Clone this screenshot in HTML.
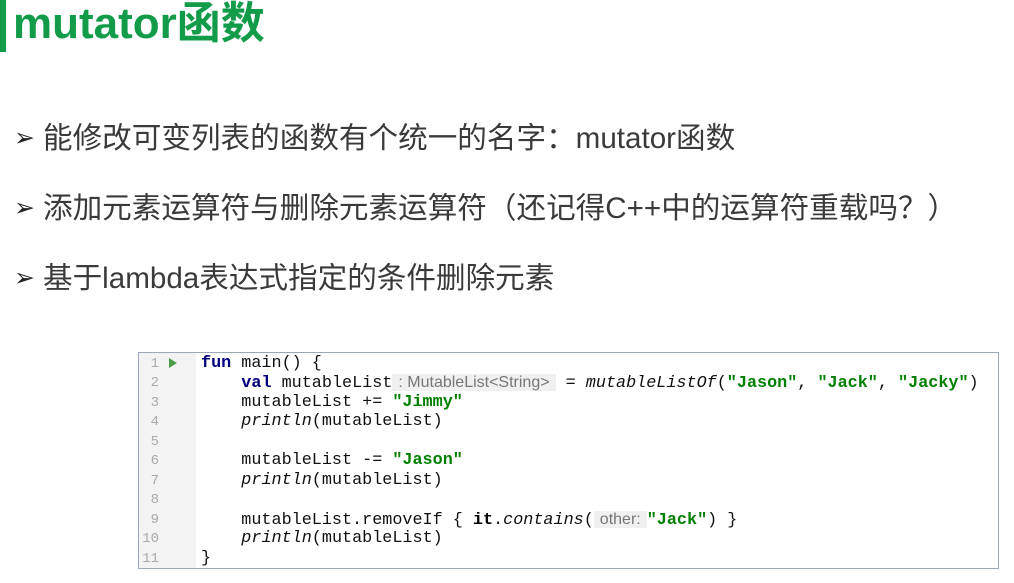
<!DOCTYPE html>
<html><head><meta charset="utf-8"><style>
body{margin:0;width:1014px;height:583px;background:#fff;position:relative;overflow:hidden;font-family:"Liberation Sans","Noto Sans CJK SC",sans-serif}
.bar{position:absolute;left:0;top:0;width:6px;height:52px;background:#129c4a}
.title{position:absolute;left:13px;top:-2px;font-size:44px;font-weight:bold;color:#129c4a;line-height:52px}
.b{position:absolute;left:14px;font-size:29.6px;color:#3a3a3a;line-height:36px;white-space:nowrap}
.b span.ar{display:inline-block;width:29px;font-size:25px;color:#222;vertical-align:2px}
.code{position:absolute;left:138px;top:352px;width:859px;height:215px;border:1px solid #9aa7b8;background:#fff;overflow:hidden}
.gut{position:absolute;left:0;top:0;width:57px;height:100%;background:#f3f3f3}
.ln{position:absolute;left:0;width:20px;text-align:right;font:14px "Liberation Mono",monospace;color:#aaa}
.cl{position:absolute;left:62px;font:16.8px "Liberation Mono",monospace;color:#111;white-space:pre;line-height:20px}
.k{color:#000080;font-weight:bold}.s{color:#008000;font-weight:bold}.i{font-style:italic}
.h{font-family:"Liberation Sans",sans-serif;color:#777;background:#f0f0f0;font-size:16px;padding:0 6px}
</style></head><body>
<div class="bar"></div>
<div class="title">mutator函数</div>
<div class="b" style="top:120px"><span class="ar">➢</span>能修改可变列表的函数有个统一的名字：mutator函数</div>
<div class="b" style="top:190px"><span class="ar">➢</span>添加元素运算符与删除元素运算符（还记得C++中的运算符重载吗？）</div>
<div class="b" style="top:260px"><span class="ar">➢</span>基于lambda表达式指定的条件删除元素</div>
<div class="code">
<div class="gut"></div>
<div style="position:absolute;left:30px;top:5px;width:0;height:0;border-left:8px solid #4a9e4a;border-top:5px solid transparent;border-bottom:5px solid transparent"></div>
<div class="ln" style="top:3px">1</div><div class="ln" style="top:22px">2</div><div class="ln" style="top:42px">3</div><div class="ln" style="top:61px">4</div><div class="ln" style="top:81px">5</div><div class="ln" style="top:100px">6</div><div class="ln" style="top:120px">7</div><div class="ln" style="top:139px">8</div><div class="ln" style="top:159px">9</div><div class="ln" style="top:178px">10</div><div class="ln" style="top:198px">11</div>
<div class="cl" style="top:1px"><span class="k">fun</span> main() {</div>
<div class="cl" style="top:20px">    <span class="k">val</span> mutableList<span class="h">: MutableList&lt;String&gt;</span> = <span class="i">mutableListOf</span>(<span class="s">"Jason"</span>, <span class="s">"Jack"</span>, <span class="s">"Jacky"</span>)</div>
<div class="cl" style="top:40px">    mutableList += <span class="s">"Jimmy"</span></div>
<div class="cl" style="top:59px">    <span class="i">println</span>(mutableList)</div>
<div class="cl" style="top:98px">    mutableList -= <span class="s">"Jason"</span></div>
<div class="cl" style="top:118px">    <span class="i">println</span>(mutableList)</div>
<div class="cl" style="top:157px">    mutableList.removeIf { <span class="k" style="color:#000">it</span>.<span class="i">contains</span>(<span class="h">other:</span><span class="s">"Jack"</span>) }</div>
<div class="cl" style="top:176px">    <span class="i">println</span>(mutableList)</div>
<div class="cl" style="top:196px">}</div>
</div>
</body></html>
